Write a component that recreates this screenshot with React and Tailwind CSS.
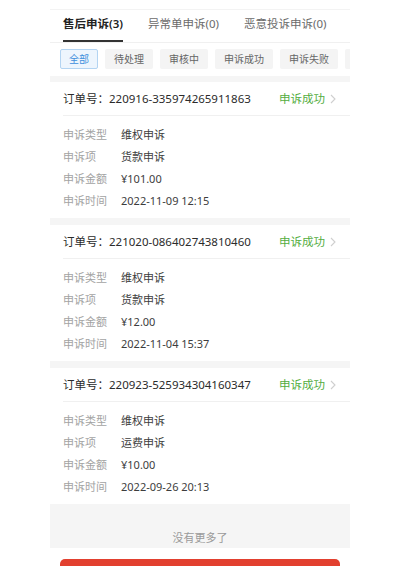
const tabs = [
  { label: '售后申诉(3)', active: true },
  { label: '异常单申诉(0)' },
  { label: '恶意投诉申诉(0)' },
];

const chips = ['全部', '待处理', '审核中', '申诉成功', '申诉失败'];

const orders = [
  { no: '220916-335974265911863', type: '维权申诉', item: '货款申诉', amount: '¥101.00', time: '2022-11-09 12:15' },
  { no: '221020-086402743810460', type: '维权申诉', item: '货款申诉', amount: '¥12.00', time: '2022-11-04 15:37' },
  { no: '220923-525934304160347', type: '维权申诉', item: '运费申诉', amount: '¥10.00', time: '2022-09-26 20:13' },
];

function Chevron() {
  return (
    <svg width="6" height="10" viewBox="0 0 6 10" className="ml-[5px]">
      <path d="M1 1l4 4-4 4" fill="none" stroke="#cfcfcf" strokeWidth="1.1" />
    </svg>
  );
}

function Row({ label, value }) {
  return (
    <div className="flex items-center h-[22px] text-[11px]">
      <span className="w-[58px] text-[#a3a3a3]">{label}</span>
      <span className="text-[#3d3d3d]">{value}</span>
    </div>
  );
}

function OrderCard({ order }) {
  return (
    <div className="bg-white">
      <div className="flex items-center justify-between h-[34px] ml-[13px] pr-[14px] border-b border-[#f0f0f0]">
        <span className="text-[11.5px] text-[#2b2b2b]">订单号：{order.no}</span>
        <span className="flex items-center text-[11.5px] text-[#54ad3f]">
          申诉成功
          <Chevron />
        </span>
      </div>
      <div className="px-[13px] pt-[8px] pb-[6px]">
        <Row label="申诉类型" value={order.type} />
        <Row label="申诉项" value={order.item} />
        <Row label="申诉金额" value={order.amount} />
        <Row label="申诉时间" value={order.time} />
      </div>
    </div>
  );
}

export default function App() {
  return (
    <div
      className="w-[400px] h-[566px] overflow-hidden bg-white"
      style={{ fontFamily: '"Noto Sans", "Noto Sans CJK SC", sans-serif' }}
    >
      <div className="w-[300px] mx-auto">
        <div className="h-[10px] border-b border-[#f3f3f3]" />
        <div className="flex items-end h-[33px] px-[13px] gap-[25px] border-b border-[#f0f0f0]">
          {tabs.map((t) => (
            <div key={t.label} className="flex flex-col items-center">
              <span
                className={
                  t.active
                    ? 'text-[11.5px] font-semibold text-[#222] leading-[14px]'
                    : 'text-[11.5px] text-[#6b6b6b] leading-[14px]'
                }
              >
                {t.label}
              </span>
              <div className={t.active ? 'mt-[9px] h-[2px] w-full bg-[#333]' : 'mt-[9px] h-[2px] w-full'} />
            </div>
          ))}
        </div>
        <div className="flex gap-[7px] pl-[10px] pt-[6px] pb-[7px] overflow-hidden whitespace-nowrap">
          {chips.map((c, i) => (
            <span
              key={c}
              className={
                i === 0
                  ? 'shrink-0 h-[20px] px-[8px] flex items-center text-[10px] rounded-[2px] bg-[#edf5fd] border border-[#b3d4f2] text-[#3f8fdc]'
                  : 'shrink-0 h-[20px] px-[9px] flex items-center text-[10px] rounded-[2px] bg-[#f4f4f4] text-[#666]'
              }
            >
              {c}
            </span>
          ))}
          <span className="shrink-0 h-[20px] w-[40px] rounded-[2px] bg-[#f4f4f4]" />
        </div>
        <div className="bg-[#f5f5f5] flex flex-col gap-[7px] pt-[6px]">
          {orders.map((o) => (
            <OrderCard key={o.no} order={o} />
          ))}
        </div>
        <div className="bg-[#f5f5f5] h-[44px] flex items-end justify-center pb-[2px]">
          <span className="text-[11px] text-[#9a9a9a]">没有更多了</span>
        </div>
        <div className="pt-[11px] px-[10px]">
          <div className="h-[40px] rounded-[5px] bg-[#e2402f]" />
        </div>
      </div>
    </div>
  );
}
